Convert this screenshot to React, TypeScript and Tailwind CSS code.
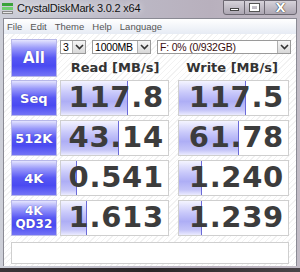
import React from "react";

const rows = [
  { label: ["Seq"], read: "117.8", write: "117.5", rb: 67, wb: 67 },
  { label: ["512K"], read: "43.14", write: "61.78", rb: 58, wb: 60 },
  { label: ["4K"], read: "0.541", write: "1.240", rb: 16, wb: 23 },
  { label: ["4K", "QD32"], read: "1.613", write: "1.239", rb: 26, wb: 23 },
];

function BlueButton({ lines, big }: { lines: string[]; big?: boolean }) {
  return (
    <div className="flex h-full w-[46px] flex-col items-center justify-center border border-[#b8b8e8] bg-[linear-gradient(#e4e4fe_0%,#9a9afa_22%,#5656f4_50%,#4a4af2_72%,#7474f6_100%)] leading-[13px] text-white font-bold [text-shadow:0_0_1px_#3030a0]">
      {lines.map((l) => (
        <span key={l} className={big ? "text-[15px]" : lines.length > 1 ? "text-[12px]" : "text-[13px]"}>
          {l}
        </span>
      ))}
    </div>
  );
}

function Cell({ value, bar }: { value: string; bar: number }) {
  return (
    <div className="relative h-full w-full border border-[#cfcfcf] bg-white">
      <div
        className="absolute left-0 top-0 h-full border-r border-[#6a6ad8] bg-[linear-gradient(#f4f4ff_0%,#c8c8fa_35%,#aeaef5_60%,#c4c4f8_85%,#ececff_100%)]"
        style={{ width: bar }}
      />
      <div className="relative flex h-full items-center justify-end pr-[4px] text-[29px] font-bold tracking-[0.7px] text-[#3c3c3c] [font-family:'DejaVu_Sans',sans-serif]">
        {value}
      </div>
    </div>
  );
}

function Combo({ text, w, red }: { text: string; w: string; red?: boolean }) {
  return (
    <div className={`flex h-[14px] items-center border border-[#9a9a9a] bg-white ${w}`}>
      <span
        className={`flex-1 overflow-hidden whitespace-nowrap pl-[2px] text-[10.5px] leading-[12px] tracking-[-0.2px] [font-family:'Liberation_Sans',sans-serif] ${
          red ? "text-[#3a1010]" : "text-black"
        }`}
      >
        {text}
      </span>
      <span className="flex h-full w-[13px] items-center justify-center border-l border-[#b0b0b0] bg-[linear-gradient(#f6f6f6,#d8d8d8)]">
        <svg width="9" height="6" viewBox="0 0 9 6">
          <path d="M1 1 L4.5 4.5 L8 1" fill="none" stroke="#333" strokeWidth="1.6" />
        </svg>
      </span>
    </div>
  );
}

export default function App() {
  return (
    <div className="relative h-[272px] w-[300px] overflow-hidden bg-[linear-gradient(90deg,#cdcfd8_0%,#bcb9c6_40%,#b8b0bd_70%,#c2bcc6_100%)] [font-family:'DejaVu_Sans',sans-serif]">
      {/* Title bar */}
      <div className="flex h-[18px] items-start">
        <div className="ml-[2px] mt-[3px] flex h-[11px] w-[11px] flex-col gap-[1px]">
          <div className="h-[3px] bg-[#3aa23a]" />
          <div className="h-[3px] bg-[#6fcf6f]" />
          <div className="h-[3px] border border-[#888] bg-[#e8e8e8]" />
        </div>
        <span className="ml-[4px] mt-[1px] text-[11px] leading-[14px] tracking-[-0.2px] text-[#111] [font-family:'Liberation_Sans',sans-serif] [text-shadow:0_0_6px_#ffffff]">
          CrystalDiskMark 3.0.2 x64
        </span>
        <div className="ml-auto mr-[3px] flex h-[15px]">
          <div className="flex w-[22px] items-end justify-center rounded-bl-[3px] border border-[#6c6872] bg-[linear-gradient(#d6d3da,#aca6b2)] pb-[3px]">
            <div className="h-[3px] w-[9px] border border-[#444] bg-white" />
          </div>
          <div className="flex w-[19px] items-center justify-center border-y border-[#6c6872] bg-[linear-gradient(#d6d3da,#aca6b2)]">
            <div className="h-[7px] w-[9px] border-2 border-white outline outline-1 outline-[#555]" />
          </div>
          <div className="flex w-[33px] items-center justify-center rounded-br-[3px] border border-[#6c6872] bg-[linear-gradient(#d6d3da,#aca6b2)]">
            <span className="text-[13px] font-bold leading-[13px] text-white [text-shadow:0_0_1px_#222,0_0_1px_#222]">X</span>
          </div>
        </div>
      </div>

      {/* Client */}
      <div className="mx-[3px] h-[248px] border border-[#8a8a94] bg-white">
        {/* Menu */}
        <div className="flex h-[15px] items-center gap-[8px] bg-[linear-gradient(#ffffff,#e6ebf4)] pl-[3px] text-[9.5px] leading-[11px] text-[#555] [font-family:'Liberation_Sans',sans-serif]">
          <span>File</span>
          <span>Edit</span>
          <span>Theme</span>
          <span>Help</span>
          <span>Language</span>
        </div>

        {/* Main */}
        <div className="flex h-[232px] flex-col bg-[repeating-linear-gradient(135deg,#ffffff_0px,#ffffff_3px,#f2f2f2_3px,#f2f2f2_4px)] px-[7px] pt-[5px]">
          <div className="flex h-[41px] gap-[3px]">
            <div className="h-[38px]">
              <BlueButton lines={["All"]} big />
            </div>
            <div className="flex flex-1 flex-col">
              <div className="flex gap-[6px] pt-[1px]">
                <Combo text="3" w="w-[26px]" />
                <Combo text="1000MB" w="w-[59px]" />
                <Combo text="F: 0% (0/932GB)" w="w-[134px]" red />
              </div>
              <div className="mt-[6px] flex text-[13px] font-bold leading-[16px] text-[#333]">
                <span className="w-[110px] text-center">Read [MB/s]</span>
                <span className="ml-[6px] w-[112px] text-center">Write [MB/s]</span>
              </div>
            </div>
          </div>

          <div className="flex flex-col gap-[4px]">
            {rows.map((r) => (
              <div key={r.read} className="flex h-[36px] gap-[3px]">
                <BlueButton lines={r.label} />
                <div className="w-[110px]">
                  <Cell value={r.read} bar={r.rb} />
                </div>
                <div className="ml-[6px] w-[112px]">
                  <Cell value={r.write} bar={r.wb} />
                </div>
              </div>
            ))}
          </div>

          <div className="mt-[6px] h-[22px] w-[278px] border border-[#cfcfcf] bg-white" />
        </div>
      </div>
      <div className="absolute bottom-0 left-0 h-[4px] w-full bg-[linear-gradient(90deg,#3a3438,#2a2628,#4a4448)]" />
    </div>
  );
}
